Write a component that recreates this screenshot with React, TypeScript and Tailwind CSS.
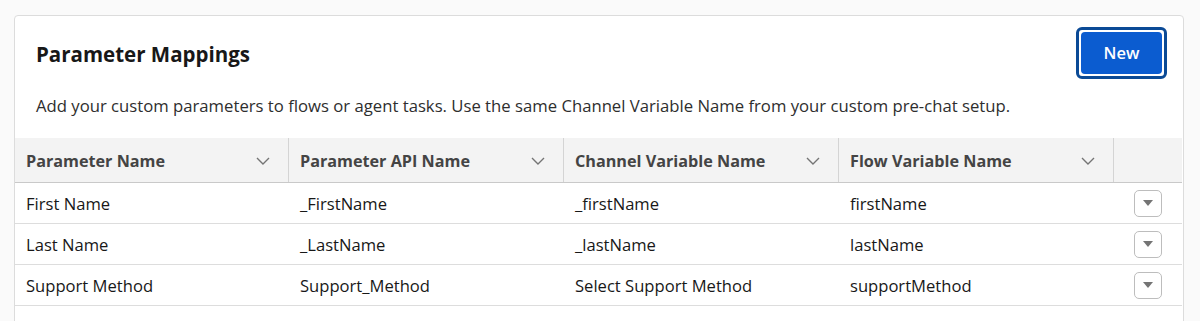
import React from 'react';

const columns = ['Parameter Name', 'Parameter API Name', 'Channel Variable Name', 'Flow Variable Name'];

const rows = [
  ['First Name', '_FirstName', '_firstName', 'firstName'],
  ['Last Name', '_LastName', '_lastName', 'lastName'],
  ['Support Method', 'Support_Method', 'Select Support Method', 'supportMethod'],
];

const Chevron = () => (
  <svg width="14" height="8" viewBox="0 0 14 8" fill="none">
    <path d="M1 1l6 6 6-6" stroke="#747474" strokeWidth="1.4" />
  </svg>
);

const RowMenu = () => (
  <button className="w-[28px] h-[27px] rounded-[5px] border border-[#bdbdbd] bg-white flex items-center justify-center">
    <svg width="10" height="6" viewBox="0 0 10 6">
      <path d="M0 0h10L5 6z" fill="#747474" />
    </svg>
  </button>
);

export default function App() {
  return (
    <div className="h-[321px] bg-[#fafafa] pt-[15px] pl-[14px] overflow-hidden" style={{ fontFamily: '"Open Sans", "Noto Sans", sans-serif' }}>
      <div className="w-[1170px] h-[320px] bg-white border border-[#dcdcdc] rounded-[4px]">
        <div className="flex justify-between items-start pl-[21px] pr-[16px] pt-[11px]">
          <h2 className="text-[20.5px] font-bold text-[#181818] mt-[14px] leading-[26px]">Parameter Mappings</h2>
          <button className="h-[52px] w-[91px] rounded-[6px] border-[3px] border-[#0b4a96] p-[2px]">
            <span className="h-full w-full rounded-[4px] bg-[#0b5cd0] text-white text-[16.5px] font-semibold flex items-center justify-center">New</span>
          </button>
        </div>
        <p className="pl-[21px] mt-[14px] text-[16.7px] text-[#2e2e2e] leading-[26px]">
          Add your custom parameters to flows or agent tasks. Use the same Channel Variable Name from your custom pre-chat setup.
        </p>
        <div className="mt-[19px] w-[1167px]">
          <div className="flex h-[45px] bg-[#f3f3f3] border-b border-[#c9c9c9] text-[16.2px] font-bold text-[#444444]">
            {columns.map((c, i) => (
              <div key={c} className={`flex items-center justify-between pl-[11px] pr-[18px] pt-[2px] ${i === 0 ? 'w-[273px]' : 'w-[275px] border-l border-[#d4d4d4]'}`}>
                <span>{c}</span>
                <Chevron />
              </div>
            ))}
            <div className="flex-1 border-l border-[#d4d4d4]" />
          </div>
          {rows.map((r) => (
            <div key={r[0]} className="flex h-[41px] border-b border-[#dddddd] text-[16.6px] text-[#181818] items-center">
              {r.map((v, i) => (
                <div key={i} className={`pl-[11px] pt-[2px] ${i === 0 ? 'w-[273px]' : 'w-[275px] pl-[12px]'}`}>{v}</div>
              ))}
              <div className="flex-1 flex justify-center pl-[1px]">
                <RowMenu />
              </div>
            </div>
          ))}
        </div>
      </div>
    </div>
  );
}
